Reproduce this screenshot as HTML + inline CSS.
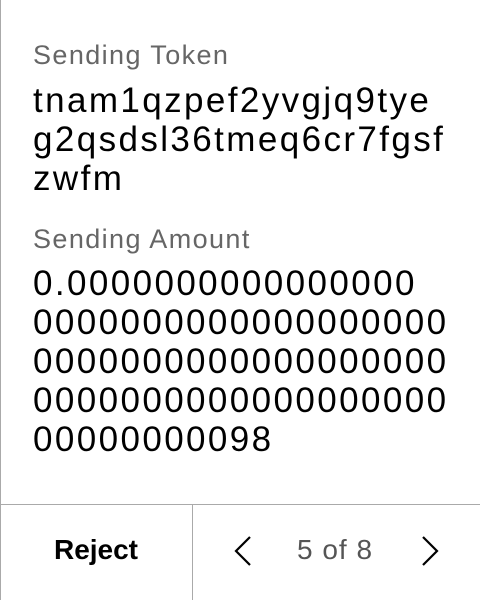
<!DOCTYPE html>
<html><head><style>
html,body{margin:0;padding:0;background:#fff;}
body{width:480px;height:600px;position:relative;overflow:hidden;font-family:"Liberation Sans",sans-serif;}
.lb{position:absolute;left:0;top:0;width:1px;height:600px;background:#aaa;}
.t{position:absolute;left:33px;white-space:nowrap;}
.lab{font-size:27px;color:#666;letter-spacing:1.4px;}
.big{font-size:35px;color:#000;letter-spacing:2.4px;}
.num{font-size:35px;color:#000;letter-spacing:2.4px;}
.hl{position:absolute;left:0;top:504px;width:480px;height:1px;background:#aaa;}
.vl{position:absolute;left:192px;top:504px;width:1px;height:96px;background:#aaa;}
</style></head><body>
<div class="lb"></div>
<div class="t lab" style="top:40px">Sending Token</div>
<div class="t big" style="top:81px">tnam1qzpef2yvgjq9tye</div>
<div class="t big" style="top:120px">g2qsdsl36tmeq6cr7fgsf</div>
<div class="t big" style="top:159px">zwfm</div>
<div class="t lab" style="top:224px">Sending Amount</div>
<div class="t num" style="top:264px">0.0000000000000000</div>
<div class="t num" style="top:303px">0000000000000000000</div>
<div class="t num" style="top:342px">0000000000000000000</div>
<div class="t num" style="top:381px">0000000000000000000</div>
<div class="t num" style="top:420px">00000000098</div>
<div class="hl"></div><div class="vl"></div>
<div style="position:absolute;left:0;width:192px;top:534px;text-align:center;font-size:28px;font-weight:bold;">Reject</div>
<div style="position:absolute;left:235px;width:200px;top:534px;text-align:center;font-size:28px;letter-spacing:1px;color:#555;">5 of 8</div>
<svg style="position:absolute;left:0;top:0" width="480" height="600">
<polyline points="250,537 236,551 250,565" fill="none" stroke="#000" stroke-width="2.2"/>
<polyline points="423,537 437,551 423,565" fill="none" stroke="#000" stroke-width="2.2"/>
</svg>
</body></html>
